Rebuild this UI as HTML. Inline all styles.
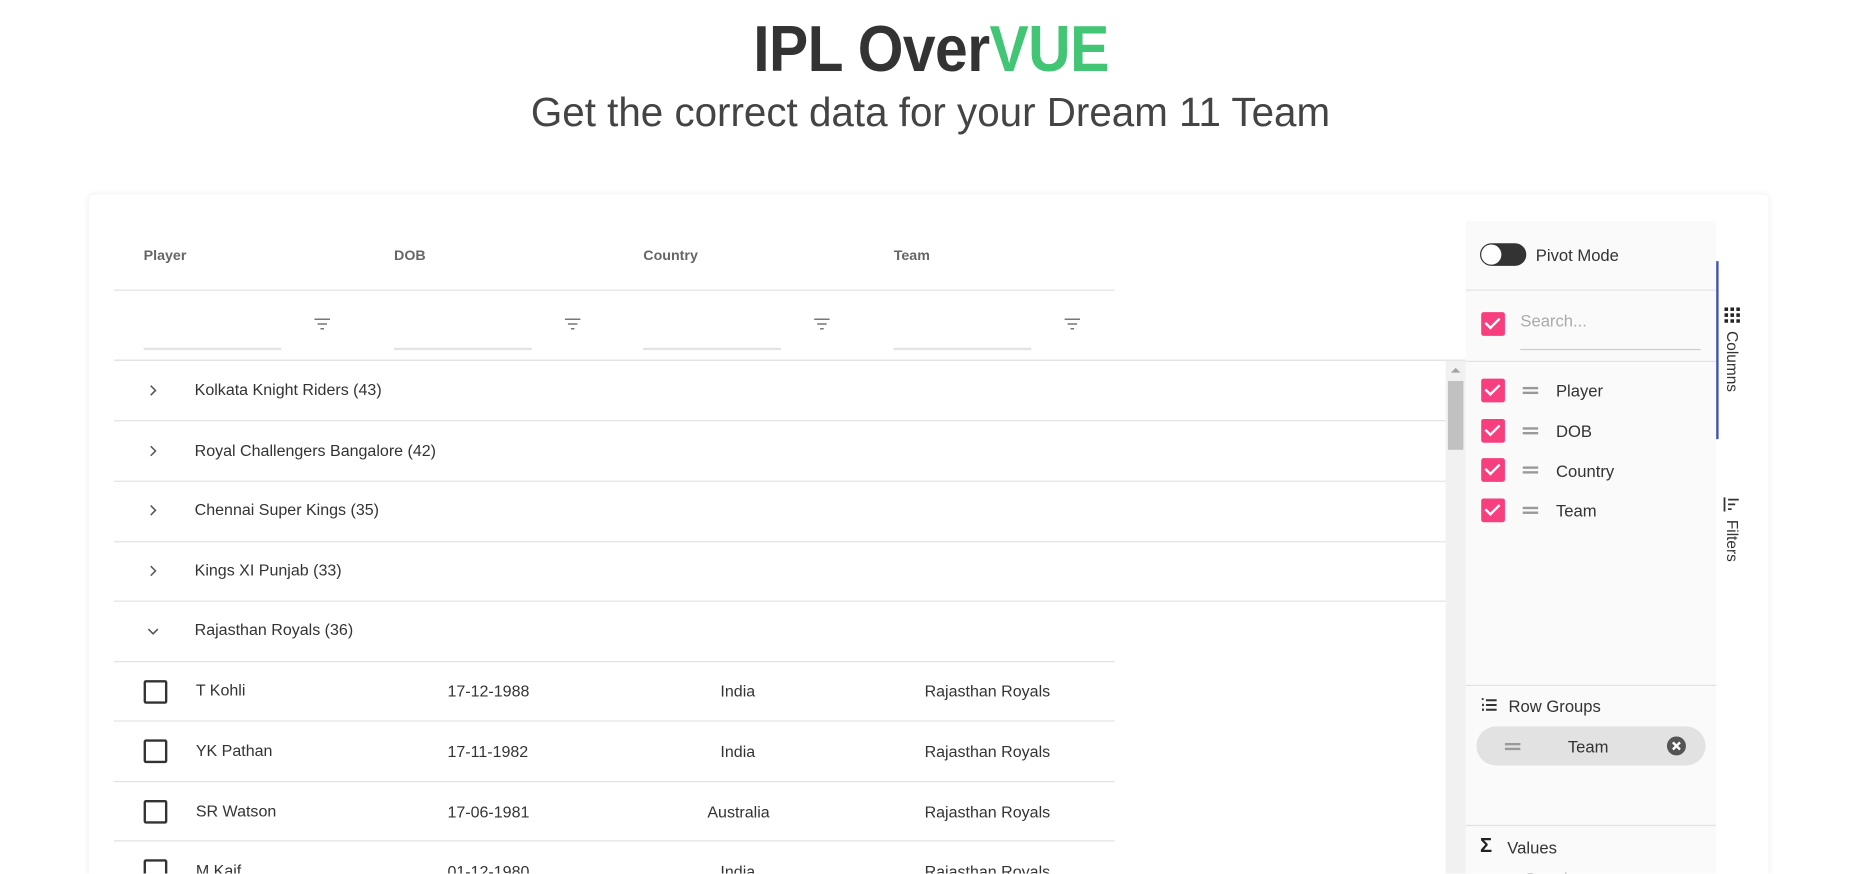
<!DOCTYPE html>
<html><head><meta charset="utf-8">
<style>
html,body{margin:0;padding:0;background:#fff;overflow:hidden;width:1861px;height:874px}
#w{position:absolute;left:0;top:0;width:1568px;height:736px;overflow:hidden;transform:scale(1.18686);transform-origin:0 0;font-family:"Liberation Sans",Arial,sans-serif;color:#333}
.a{position:absolute}
.t{white-space:nowrap}
.h1{left:0;width:1568px;text-align:center;top:9px;font-size:55px;font-weight:bold;color:#333}
.h1 span{display:inline-block;transform:scaleX(0.9);letter-spacing:-0.5px}
.h2{left:0;width:1568px;text-align:center;top:76px;font-size:34px;color:#444}
.card{left:75px;top:164px;width:1415px;height:600px;background:#fff;box-shadow:0 0 6px rgba(0,0,0,0.08);border-radius:4px}
.hl{font-size:12px;font-weight:bold;color:#666;top:208px}
.line{height:1px;background:#e2e2e2}
.fu{height:2px;background:#e3e3e3;top:293px;width:116px}
.gt{font-size:13.5px;color:#333}
.cb{width:16px;height:16px;border:2px solid #333;border-radius:2px}
.pk{width:20px;height:20px;background:#f73e7e;border-radius:2px}
.pk:after{content:"";position:absolute;left:6px;top:2px;width:5px;height:10px;border:solid #fff;border-width:0 2.5px 2.5px 0;transform:rotate(45deg)}
.dr{width:13px;border-top:2px solid #999;border-bottom:2px solid #999;box-sizing:border-box;height:6px}
.sp{font-size:14px;color:#333}
</style></head><body><div id="w">
<div class="a h1 t"><span>IPL Over<span style="color:#42c574;transform:none;letter-spacing:-0.5px">VUE</span></span></div>
<div class="a h2 t">Get the correct data for your Dream 11 Team</div>
<div class="a card"></div>

<div class="a hl t" style="left:121px">Player</div>
<div class="a hl t" style="left:332px">DOB</div>
<div class="a hl t" style="left:542px">Country</div>
<div class="a hl t" style="left:753px">Team</div>
<div class="a line" style="left:96px;top:244px;width:843px"></div>
<div class="a fu" style="left:121px"></div>
<div class="a fu" style="left:332px"></div>
<div class="a fu" style="left:542px"></div>
<div class="a fu" style="left:753px"></div>
<svg class="a" style="left:264px;top:267px" width="15" height="12"><path d="M1 2h13M3.5 6h8M6 10h3" stroke="#777" stroke-width="1.3"/></svg>
<svg class="a" style="left:475px;top:267px" width="15" height="12"><path d="M1 2h13M3.5 6h8M6 10h3" stroke="#777" stroke-width="1.3"/></svg>
<svg class="a" style="left:685px;top:267px" width="15" height="12"><path d="M1 2h13M3.5 6h8M6 10h3" stroke="#777" stroke-width="1.3"/></svg>
<svg class="a" style="left:896px;top:267px" width="15" height="12"><path d="M1 2h13M3.5 6h8M6 10h3" stroke="#777" stroke-width="1.3"/></svg>
<div class="a line" style="left:96px;top:303px;width:1139px;background:#ddd"></div>

<svg class="a" style="left:124px;top:323px" width="10" height="12"><path d="M3 2l4 4-4 4" fill="none" stroke="#555" stroke-width="1.3"/></svg>
<div class="a gt t" style="left:164px;top:321px">Kolkata Knight Riders (43)</div>
<div class="a line" style="left:96px;top:354px;width:1122px"></div>
<svg class="a" style="left:124px;top:374px" width="10" height="12"><path d="M3 2l4 4-4 4" fill="none" stroke="#555" stroke-width="1.3"/></svg>
<div class="a gt t" style="left:164px;top:372px">Royal Challengers Bangalore (42)</div>
<div class="a line" style="left:96px;top:405px;width:1122px"></div>
<svg class="a" style="left:124px;top:424px" width="10" height="12"><path d="M3 2l4 4-4 4" fill="none" stroke="#555" stroke-width="1.3"/></svg>
<div class="a gt t" style="left:164px;top:422px">Chennai Super Kings (35)</div>
<div class="a line" style="left:96px;top:456px;width:1122px"></div>
<svg class="a" style="left:124px;top:475px" width="10" height="12"><path d="M3 2l4 4-4 4" fill="none" stroke="#555" stroke-width="1.3"/></svg>
<div class="a gt t" style="left:164px;top:473px">Kings XI Punjab (33)</div>
<div class="a line" style="left:96px;top:506px;width:1122px"></div>
<svg class="a" style="left:123px;top:527px" width="12" height="10"><path d="M2 3l4 4 4-4" fill="none" stroke="#555" stroke-width="1.3"/></svg>
<div class="a gt t" style="left:164px;top:523px">Rajasthan Royals (36)</div>
<div class="a line" style="left:96px;top:557px;width:843px"></div>

<div class="a cb" style="left:121px;top:573px"></div>
<div class="a gt t" style="left:165px;top:574px">T Kohli</div>
<div class="a gt t" style="left:377px;top:575px">17-12-1988</div>
<div class="a gt t" style="left:607px;top:575px">India</div>
<div class="a gt t" style="left:779px;top:575px">Rajasthan Royals</div>
<div class="a line" style="left:96px;top:607px;width:843px"></div>
<div class="a cb" style="left:121px;top:623px"></div>
<div class="a gt t" style="left:165px;top:625px">YK Pathan</div>
<div class="a gt t" style="left:377px;top:626px">17-11-1982</div>
<div class="a gt t" style="left:607px;top:626px">India</div>
<div class="a gt t" style="left:779px;top:626px">Rajasthan Royals</div>
<div class="a line" style="left:96px;top:658px;width:843px"></div>
<div class="a cb" style="left:121px;top:674px"></div>
<div class="a gt t" style="left:165px;top:676px">SR Watson</div>
<div class="a gt t" style="left:377px;top:677px">17-06-1981</div>
<div class="a gt t" style="left:596px;top:677px">Australia</div>
<div class="a gt t" style="left:779px;top:677px">Rajasthan Royals</div>
<div class="a line" style="left:96px;top:708px;width:843px"></div>
<div class="a cb" style="left:121px;top:724px"></div>
<div class="a gt t" style="left:165px;top:726px">M Kaif</div>
<div class="a gt t" style="left:377px;top:727px">01-12-1980</div>
<div class="a gt t" style="left:607px;top:727px">India</div>
<div class="a gt t" style="left:779px;top:727px">Rajasthan Royals</div>

<div class="a" style="left:1218px;top:304px;width:17px;height:432px;background:#f1f1f1"></div>
<div class="a" style="left:1220px;top:321px;width:13px;height:58px;background:#c1c1c1"></div>
<svg class="a" style="left:1222px;top:309px" width="9" height="6"><path d="M0.5 5L4.5 1 8.5 5z" fill="#a3a3a3"/></svg>

<div class="a" style="left:1235px;top:186px;width:211px;height:550px;background:#fafafa"></div>
<div class="a" style="left:1247px;top:205px;width:39px;height:19px;border-radius:10px;background:#333"></div>
<div class="a" style="left:1248px;top:206px;width:17px;height:17px;border-radius:50%;background:#fff"></div>
<div class="a sp t" style="left:1294px;top:207px">Pivot Mode</div>
<div class="a line" style="left:1235px;top:244px;width:211px"></div>
<div class="a pk" style="left:1248px;top:263px"></div>
<div class="a t" style="left:1281px;top:262px;font-size:14px;color:#aaa">Search...</div>
<div class="a" style="left:1281px;top:294px;width:152px;height:1px;background:#ccc"></div>
<div class="a line" style="left:1235px;top:304px;width:211px"></div>

<div class="a pk" style="left:1248px;top:319px"></div><div class="a dr" style="left:1283px;top:326px"></div><div class="a sp t" style="left:1311px;top:321px">Player</div>
<div class="a pk" style="left:1248px;top:353px"></div><div class="a dr" style="left:1283px;top:360px"></div><div class="a sp t" style="left:1311px;top:355px">DOB</div>
<div class="a pk" style="left:1248px;top:386px"></div><div class="a dr" style="left:1283px;top:393px"></div><div class="a sp t" style="left:1311px;top:389px">Country</div>
<div class="a pk" style="left:1248px;top:420px"></div><div class="a dr" style="left:1283px;top:427px"></div><div class="a sp t" style="left:1311px;top:422px">Team</div>

<div class="a line" style="left:1235px;top:577px;width:211px"></div>
<svg class="a" style="left:1248px;top:588px" width="14" height="12"><path d="M0.5 1h1.5M4 2h9M4 6h9M4 10h9M1.5 5v2M1.5 9v2" stroke="#333" stroke-width="1.6"/></svg>
<div class="a sp t" style="left:1271px;top:587px">Row Groups</div>
<div class="a" style="left:1244px;top:612px;width:193px;height:33px;border-radius:17px;background:#e2e2e2"></div>
<div class="a dr" style="left:1268px;top:626px"></div>
<div class="a sp t" style="left:1321px;top:621px">Team</div>
<svg class="a" style="left:1404px;top:620px" width="17" height="17"><circle cx="8.5" cy="8.5" r="8" fill="#555"/><path d="M5.5 5.5l6 6M11.5 5.5l-6 6" stroke="#fff" stroke-width="2"/></svg>
<div class="a line" style="left:1235px;top:695px;width:211px"></div>
<div class="a t" style="left:1247px;top:703px;font-size:17px;font-weight:bold;color:#222">Σ</div>
<div class="a sp t" style="left:1270px;top:706px">Values</div>
<div class="a t" style="left:1286px;top:733px;font-size:13px;color:#999">Drag here to aggregate</div>

<div class="a" style="left:1446px;top:220px;width:1.5px;height:150px;background:#3f51b5"></div>
<svg class="a" style="left:1453px;top:259px" width="13" height="13"><g fill="#222"><rect x="0" y="0" width="3" height="3"/><rect x="5" y="0" width="3" height="3"/><rect x="10" y="0" width="3" height="3"/><rect x="0" y="5" width="3" height="3"/><rect x="5" y="5" width="3" height="3"/><rect x="10" y="5" width="3" height="3"/><rect x="0" y="10" width="3" height="3"/><rect x="5" y="10" width="3" height="3"/><rect x="10" y="10" width="3" height="3"/></g></svg>
<div class="a t" style="left:1452px;top:279px;font-size:13px;writing-mode:vertical-rl;color:#333">Columns</div>
<svg class="a" style="left:1452px;top:419px" width="14" height="12"><path d="M1 0v12M4 2h9M4 6h6M4 10h3" stroke="#333" stroke-width="1.5"/></svg>
<div class="a t" style="left:1452px;top:438px;font-size:13px;writing-mode:vertical-rl;color:#333">Filters</div>
</div></body></html>
